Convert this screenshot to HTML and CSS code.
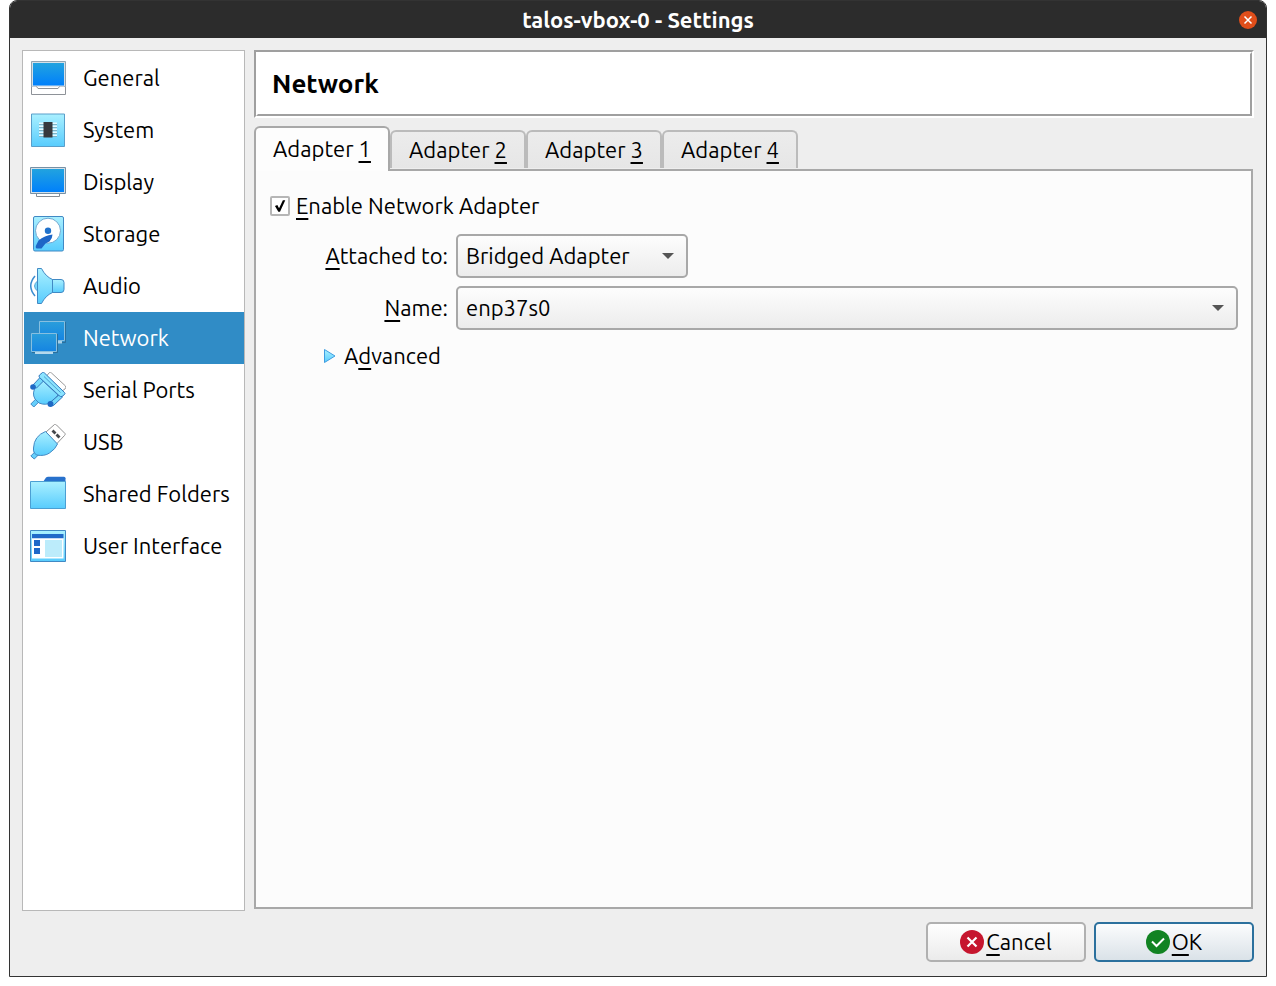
FILE: index.html
```html
<!DOCTYPE html>
<html lang="en">
<head>
    <meta charset="UTF-8">
    <meta name="viewport" content="width=device-width, initial-scale=1.0">
    <title>talos-vbox-0 - Settings</title>
    <link rel="stylesheet" href="styles.css">
</head>
<body>
    <div class="window">
        <header class="titlebar">
            <h1>talos-vbox-0 - Settings</h1>
            <button class="close-btn" aria-label="Close">
                <svg viewBox="0 0 18 18"><path d="M5.5 5.5l7 7M12.5 5.5l-7 7" stroke="#fff" stroke-width="1.5" fill="none"/></svg>
            </button>
        </header>

        <div class="content">
            <div class="columns">
                <nav class="sidebar">
                    <!-- shared gradients -->
                    <svg class="defs" aria-hidden="true">
                        <defs>
                            <linearGradient id="screen" x1="0" y1="0" x2="0" y2="1"><stop offset="0" stop-color="#22a3df"/><stop offset="1" stop-color="#0080fb"/></linearGradient>
                            <linearGradient id="light" x1="0" y1="0" x2="0" y2="1"><stop offset="0" stop-color="#aaf0ff"/><stop offset="1" stop-color="#58ccfd"/></linearGradient>
                            <linearGradient id="netscreen" x1="0" y1="0" x2="0" y2="1"><stop offset="0" stop-color="#2a9edb"/><stop offset="1" stop-color="#1584e2"/></linearGradient>
                        </defs>
                    </svg>
                    <a class="item" href="#general">
                        <svg class="icon" viewBox="0 0 36 36">
                            <path d="M1.5 26.5h34v8h-34z" fill="#fff" stroke="#8e9298"/>
                            <path d="M1.5 1.5h34v25h-34z" fill="#d5e0e8" stroke="#93a5b2"/>
                            <path d="M3 3h31v22.5H3z" fill="url(#screen)"/>
                            <path d="M2 26h32.500v1H2z" fill="#c4ccd2"/>
                            <path d="M6.500 26.500l1.500 2h20l1.500-2" fill="#fff" stroke="#8e9298"/>
                        </svg>
                        General
                    </a>
                    <a class="item" href="#system">
                        <svg class="icon" viewBox="0 0 36 36">
                            <path d="M1.5 2h33v32.5h-33z" fill="url(#light)" stroke="#5a9fca"/>
                            <path d="M9 11.5h18M9 14.5h18M9 17.5h18M9 20.5h18M9 23.5h18" stroke="#e6faff" stroke-width="2"/>
                            <path d="M9 12.5h18M9 15.5h18M9 18.5h18M9 21.5h18M9 24.5h18" stroke="#6a9cae" stroke-width=".7"/>
                            <path d="M13.5 10h9v15.5h-9z" fill="#36393d"/>
                        </svg>
                        System
                    </a>
                    <a class="item" href="#display">
                        <svg class="icon" viewBox="0 0 36 36">
                            <path d="M6.5 29h23v3.5h-23z" fill="#fff" stroke="#858b93"/>
                            <path d="M.5 3.5h35v26H.5z" fill="#d5e0e8" stroke="#7690a5"/>
                            <path d="M2 5h32v23H2z" fill="url(#screen)"/>
                        </svg>
                        Display
                    </a>
                    <a class="item" href="#storage">
                        <svg class="icon" viewBox="0 0 36 36">
                            <rect x="3.5" y=".5" width="30" height="34.5" rx="1.5" fill="url(#light)" stroke="#4189c4"/>
                            <circle cx="18" cy="14.7" r="12.5" fill="#fff" stroke="#70a9d2"/>
                            <circle cx="18" cy="14.7" r="3.2" fill="#2172cb"/>
                            <path d="M22.500 18.500q0 4-3 7l-4 2-4 5h-4.500q-2-.5-1-3l2.500-5q6-5 14-6z" fill="#1e66c7"/>
                        </svg>
                        Storage
                    </a>
                    <a class="item" href="#audio">
                        <svg class="icon" viewBox="0 0 36 36">
                            <path d="M5 8q-8.500 10 0 20" fill="none" stroke="#3b8dd0" stroke-width="1.5"/>
                            <path d="M8 12.5q-7 5.5 0 11z" fill="#78d8fb" stroke="#56a6d8"/>
                            <path d="M22 11.5h9q3 0 3 3v7q0 3-3 3h-9z" fill="url(#light)" stroke="#4189c4"/>
                            <path d="M7.5.5h4q4 8 11 11v13q-7 3-11 11h-4z" fill="url(#light)" stroke="#4189c4" stroke-linejoin="round"/>
                        </svg>
                        Audio
                    </a>
                    <a class="item selected" href="#network" aria-current="page">
                        <svg class="icon" viewBox="0 0 36 36">
                            <path d="M28 22.500h7.500V2" fill="none" stroke="#2a6f9c"/>
                            <path d="M27 21h5v2.500h-5z" fill="#a5d0ea"/>
                            <path d="M9.5 1.500h25v19h-25z" fill="url(#netscreen)" stroke="#86bfe0"/>
                            <path d="M2 32.500h25.500V14" fill="none" stroke="#2a6f9c"/>
                            <path d="M5 31h18v3H5z" fill="#b5d8ed"/>
                            <path d="M1.5 13.5h25v18h-25z" fill="url(#netscreen)" stroke="#86bfe0"/>
                        </svg>
                        Network
                    </a>
                    <a class="item" href="#serial">
                        <svg class="icon" viewBox="0 0 36 36">
                            <path d="M16.5 4l3-3.500q1-.5 2 .5l14 13q1 1-.5 3l-3 2z" fill="#fff" stroke="#999"/>
                            <path d="M.8 32l5-5 3 3-5 5z" fill="#65cffb" stroke="#4189c4"/>
                            <path d="M12 8L6 14.500Q1.500 21 5 27l4 4q7 3 13-1l6-7z" fill="url(#light)" stroke="#4189c4"/>
                            <path d="M10 5.500l3.500 3.500-7 7-3.500-3z" fill="#75d9fb" stroke="#3277bd"/>
                            <circle cx="3" cy="15" r="2.800" fill="#1f69c5"/>
                            <path d="M29.500 22.500l3 2.500-9 8.500-3.500-3z" fill="#75d9fb" stroke="#3277bd"/>
                            <circle cx="20.5" cy="32" r="3" fill="#1f69c5"/>
                            <path d="M9.5 3l3-2.500q1-.5 2 .5l20 19.500q1 1 0 2l-2.500 2q-1.500.5-3-1L9.500 5.500q-1-1.500 0-2.500z" fill="#8be4ff" stroke="#3277bd"/>
                            <path d="M14 4.500l16.500 16" stroke="#4c9fce" fill="none"/>
                        </svg>
                        Serial Ports
                    </a>
                    <a class="item" href="#usb">
                        <svg class="icon" viewBox="0 0 36 36">
                            <path d="M16 8l8.500-7.500q1-.5 2 .5l8.500 8.500q.5 1-.5 2l-8 8.500z" fill="#fff" stroke="#929292"/>
                            <path d="M21.500 7.500l2-2 3 3-2 2zM25.500 11.500l2-2 3 3-2 2z" fill="#44484c"/>
                            <path d="M.8 32l4-4 3.500 3-4 4z" fill="#67d0fb" stroke="#4189c4"/>
                            <path d="M15.5 7.500Q4 12 3.500 24q-.5 3 1 5l2 2q8 1.500 13-2 6-4 8-9z" fill="url(#light)" stroke="#4189c4"/>
                        </svg>
                        USB
                    </a>
                    <a class="item" href="#folders">
                        <svg class="icon" viewBox="0 0 36 36">
                            <path d="M13 6l3-4.500q1-.7 2-.7h16q1.500 0 1.500 1.500V6z" fill="#2871cc"/>
                            <path d="M.5 5.500h35v27H.5z" fill="url(#light)" stroke="#4b9fd3"/>
                        </svg>
                        Shared Folders
                    </a>
                    <a class="item" href="#ui">
                        <svg class="icon" viewBox="0 0 36 36">
                            <path d="M.5 2.500h35v31H.5z" fill="url(#light)" stroke="#4189c4"/>
                            <path d="M2 10h31.500v20.500H2z" fill="#fff"/>
                            <path d="M2 6h31.500v4.200H2zM4 12h6v6H4zM4 20h6v6H4z" fill="#2069c9"/>
                            <path d="M15 12h17v17H15z" fill="#bcecfb"/>
                        </svg>
                        User Interface
                    </a>
                </nav>

                <main class="page">
                    <div class="page-header"><h2>Network</h2></div>

                    <div class="tabs" role="tablist">
                        <button class="tab active" role="tab" aria-selected="true">Adapter <u>1</u></button>
                        <button class="tab" role="tab" aria-selected="false">Adapter <u>2</u></button>
                        <button class="tab" role="tab" aria-selected="false">Adapter <u>3</u></button>
                        <button class="tab" role="tab" aria-selected="false">Adapter <u>4</u></button>
                    </div>

                    <section class="pane" role="tabpanel">
                        <div class="check-row">
                            <input type="checkbox" id="enable" checked>
                            <label for="enable"><u>E</u>nable Network Adapter</label>
                        </div>
                        <div class="form">
                            <label for="attached"><u>A</u>ttached to:</label>
                            <div class="combo short">
                                <select id="attached">
                                    <option>Bridged Adapter</option>
                                </select>
                            </div>
                            <label for="name"><u>N</u>ame:</label>
                            <div class="combo">
                                <select id="name">
                                    <option>enp37s0</option>
                                </select>
                            </div>
                        </div>
                        <button class="advanced" aria-expanded="false">
                            <svg viewBox="0 0 12 16"><path d="M.5 1.500v13L11 8z" fill="url(#light)" stroke="#3f9de0"/></svg>
                            <span>A<u>d</u>vanced</span>
                        </button>
                    </section>
                </main>
            </div>

            <footer class="actions">
                <button class="btn">
                    <svg viewBox="0 0 24 24"><circle cx="12" cy="12" r="12" fill="#c6162e"/><path d="M7.500 7.500l9 9M16.500 7.500l-9 9" stroke="#fff" stroke-width="2.2"/></svg>
                    <span><u>C</u>ancel</span>
                </button>
                <button class="btn primary">
                    <svg viewBox="0 0 24 24"><circle cx="12" cy="12" r="12" fill="#118322"/><path d="M6 11.500l4.500 4.500L18 8.500" fill="none" stroke="#fff" stroke-width="2"/></svg>
                    <span><u>O</u>K</span>
                </button>
            </footer>
        </div>
    </div>
</body>
</html>
```
FILE: styles.css
```css
:root {
    --line: #a8a8a8;
    --bg: #eeeeee;
    --accent: #308cc6;
}
* {
    margin: 0;
    padding: 0;
    box-sizing: border-box;
}
body {
    min-height: 100vh;
    display: flex;
    padding: 0 9px 9px;
    background: #fff;
    color: #000;
    font-family: "Ubuntu", "Noto Sans", sans-serif;
    font-size: 22px;
    line-height: 28px;
}
button, select {
    font: inherit;
    color: inherit;
}
u {
    text-decoration-thickness: 2px;
    text-underline-offset: 4px;
    text-decoration-skip-ink: none;
}
.window {
    flex: 1;
    display: flex;
    flex-direction: column;
    border: 1px solid #333;
    border-radius: 8px 8px 0 0;
    background: var(--bg);
    overflow: hidden;
}

/* Title bar */
.titlebar {
    display: flex;
    align-items: center;
    height: 37px;
    padding: 0 9px 0 27px;
    background: #2c2c2c;
    color: #fff;
}
.titlebar h1 {
    flex: 1;
    text-align: center;
    font-size: 22px;
}
.close-btn {
    width: 18px;
    height: 18px;
    border: none;
    border-radius: 50%;
    background: #e04e1a;
}
.close-btn svg {
    display: block;
}

.content {
    flex: 1;
    display: flex;
    flex-direction: column;
    gap: 11px;
    padding: 12px 12px 14px;
}
.columns {
    flex: 1;
    display: flex;
    gap: 9px;
}

/* Category list */
.sidebar {
    flex: 0 0 223px;
    padding: 1px 0 1px 1px;
    border: 1px solid #b8b8b8;
    background: #fff;
}
.defs {
    position: absolute;
    width: 0;
    height: 0;
}
.item {
    display: flex;
    align-items: center;
    gap: 17px;
    height: 52px;
    padding-left: 6px;
    color: #000;
    text-decoration: none;
    white-space: nowrap;
}
.item.selected {
    background: var(--accent);
    color: #fff;
}
.icon {
    flex: none;
    width: 36px;
    height: 36px;
}

/* Settings page */
.page {
    flex: 1;
    display: flex;
    flex-direction: column;
    padding-bottom: 2px;
}
.page-header {
    border: 2px solid;
    border-color: #9f9f9f #fff #fff #9f9f9f;
    background: #fff;
}
.page-header h2 {
    padding: 16px 14px;
    border: 2px solid;
    border-color: #fff #9f9f9f #9f9f9f #fff;
    font-size: 26px;
    line-height: 28px;
}
.tabs {
    display: flex;
    align-items: flex-end;
    height: 51px;
}
.tab {
    width: 136px;
    height: 38px;
    margin-bottom: 1px;
    border: 2px solid #bbb;
    border-bottom: none;
    border-radius: 6px 6px 0 0;
    background: linear-gradient(#ececec, #e6e6e6);
}
.tab.active {
    position: relative;
    height: 45px;
    margin-bottom: -2px;
    padding-bottom: 2px;
    border-color: var(--line);
    background: #fdfdfd;
}
.pane {
    flex: 1;
    margin-right: 1px;
    padding: 21px 13px 0 14px;
    border: 2px solid var(--line);
    background: #fcfcfc;
}
.check-row {
    display: flex;
    align-items: center;
    gap: 6px;
}
.check-row input {
    appearance: none;
    display: grid;
    place-items: center;
    width: 20px;
    height: 20px;
    border: 2px solid #b6b6b6;
    border-radius: 2px;
    background: #fff;
}
.check-row input:checked::before {
    content: "";
    width: 12px;
    height: 12px;
    background: #000;
    clip-path: polygon(8% 50%, 28% 42%, 42% 68%, 74% 2%, 94% 2%, 50% 98%, 36% 98%);
}
.form {
    display: grid;
    grid-template-columns: 124px 1fr;
    align-items: center;
    gap: 8px;
    margin: 14px 0 12px;
    padding-left: 54px;
}
.form label {
    text-align: right;
    white-space: nowrap;
}
.combo {
    position: relative;
}
.combo.short {
    width: 232px;
}
.combo select {
    appearance: none;
    display: block;
    width: 100%;
    height: 44px;
    padding: 0 36px 0 8px;
    border: 2px solid var(--line);
    border-radius: 5px;
    background: linear-gradient(#fdfdfd, #ececec);
}
.combo::after {
    content: "";
    position: absolute;
    top: 19px;
    right: 14px;
    border: 6px solid transparent;
    border-top-color: #555;
    border-bottom: none;
    pointer-events: none;
}
.advanced {
    display: flex;
    align-items: center;
    gap: 8px;
    margin-left: 54px;
    border: none;
    background: none;
}
.advanced svg {
    width: 12px;
    height: 16px;
}

/* Dialog buttons */
.actions {
    display: flex;
    justify-content: flex-end;
    gap: 8px;
}
.btn {
    display: flex;
    align-items: center;
    justify-content: center;
    gap: 2px;
    width: 160px;
    height: 40px;
    border: 2px solid #b0b0b0;
    border-radius: 5px;
    background: linear-gradient(#fefefe, #ebebeb);
}
.btn.primary {
    border-color: #2b709d;
    background: linear-gradient(#fbfcfd, #dae2e8);
}
.btn svg {
    width: 24px;
    height: 24px;
}
```
